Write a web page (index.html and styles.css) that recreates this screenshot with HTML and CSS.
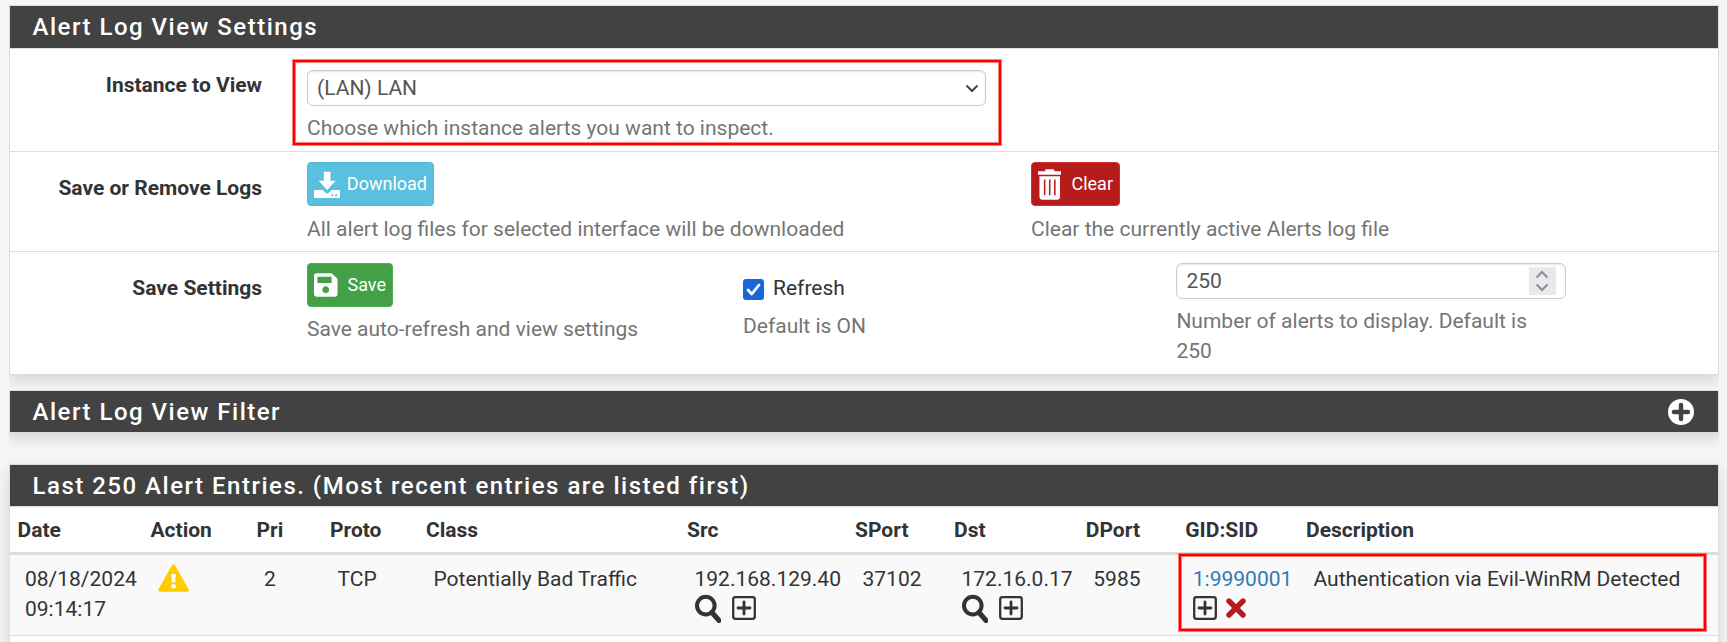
FILE: index.html
```
<!DOCTYPE html>
<html lang="en">
<head>
<meta charset="utf-8">
<title>Alert Log View</title>
<link rel="stylesheet" href="styles.css">
</head>
<body>
<svg class="defs" width="0" height="0" aria-hidden="true">
  <symbol id="i-search" viewBox="0 0 26 29"><circle cx="10.8" cy="11.6" r="8.8" fill="none" stroke="currentColor" stroke-width="4"/><path d="M17 18.500L24 26.500" stroke="currentColor" stroke-width="5" stroke-linecap="round"/></symbol>
  <symbol id="i-plus-sq" viewBox="0 0 24 24"><rect x="1.200" y="1.200" width="21.600" height="21.600" rx="2.200" fill="none" stroke="currentColor" stroke-width="2.300"/><path d="M12 6v12M6 12h12" stroke="currentColor" stroke-width="2.800" stroke-linecap="round"/></symbol>
  <symbol id="i-x" viewBox="0 0 20 20"><path d="M3 3L17 17M17 3L3 17" stroke="currentColor" stroke-width="5.400" stroke-linecap="round"/></symbol>
</svg>

<section class="panel panel-settings">
  <h2 class="panel-title">Alert Log View Settings</h2>
  <div class="row row-instance">
    <div class="label">Instance to View</div>
    <div class="instance">
      <div class="select"><span>(LAN) LAN</span>
        <svg width="14" height="9" viewBox="0 0 14 9"><path d="M1.500 1.500L7 7L12.500 1.500" fill="none" stroke="#444" stroke-width="2"/></svg>
      </div>
      <div class="help">Choose which instance alerts you want to inspect.</div>
      <div class="highlight highlight-instance"></div>
    </div>
  </div>
  <div class="row row-logs">
    <div class="label">Save or Remove Logs</div>
    <div class="col-download">
      <button class="btn btn-info"><svg width="28" height="30" viewBox="0 0 28 30"><path fill="#fff" d="M10.500 2h7v9.500h5.500L14 21.500L5 11.500h5.500z"/><path fill="#fff" fill-rule="evenodd" d="M1.500 21.500h7.500l5 4l5-4h7.500q1.500 0 1.500 1.500v5.500q0 1.500-1.500 1.500h-25Q0 30 0 28.500v-5.500q0-1.500 1.500-1.500zM18.500 26v2h2v-2zM22.500 26v2h2v-2z"/></svg><span>Download</span></button>
      <div class="help">All alert log files for selected interface will be downloaded</div>
    </div>
    <div class="col-clear">
      <button class="btn btn-danger"><svg width="24" height="32" viewBox="0 0 24 32"><path fill="#fff" fill-rule="evenodd" d="M0 3h7l1-2h8l1 2h7v3.500H0zM1.500 8h21v21q0 3-3 3h-15q-3 0-3-3zM6 11.500v16h1.600v-16zM11.200 11.500v16h1.600v-16zM16.400 11.500v16h1.600v-16z"/></svg><span>Clear</span></button>
      <div class="help">Clear the currently active Alerts log file</div>
    </div>
  </div>
  <div class="row row-save">
    <div class="label">Save Settings</div>
    <div class="col-save">
      <button class="btn btn-success"><svg width="24" height="24" viewBox="0 0 24 24"><path fill="#fff" fill-rule="evenodd" d="M2.500 0h15.500l6 5.500v16q0 2.500-2.500 2.500h-19Q0 24 0 21.500v-19Q0 0 2.500 0zM3.500 3.500v6.500h14.500V3.500zM12 13.300a3.500 3.500 0 1 0 .01 0z"/></svg><span>Save</span></button>
      <div class="help">Save auto-refresh and view settings</div>
    </div>
    <div class="col-refresh">
      <div class="check"><svg width="21" height="21" viewBox="0 0 21 21"><rect width="21" height="21" rx="3" fill="#1a66d8"/><path d="M5 11L8.800 15L16 6" fill="none" stroke="#fff" stroke-width="2.800" stroke-linecap="round" stroke-linejoin="round"/></svg><span>Refresh</span></div>
      <div class="help">Default is ON</div>
    </div>
    <div class="col-number">
      <div class="number"><span>250</span>
        <span class="spinner"><svg width="14" height="22" viewBox="0 0 14 22"><path d="M1.500 7.500L7 2L12.500 7.500M1.500 14.500L7 20L12.500 14.500" fill="none" stroke="#8f8f9d" stroke-width="2.200"/></svg></span>
      </div>
      <div class="help">Number of alerts to display. Default is 250</div>
    </div>
  </div>
</section>

<section class="panel panel-filter">
  <h2 class="panel-title">Alert Log View Filter
    <svg class="expand" width="26" height="26" viewBox="0 0 26 26"><circle cx="13" cy="13" r="13" fill="#fff"/><path d="M13 6v14M6 13h14" stroke="#424242" stroke-width="4.400" stroke-linecap="round"/></svg>
  </h2>
</section>

<section class="panel panel-entries">
  <h2 class="panel-title">Last 250 Alert Entries. (Most recent entries are listed first)</h2>
  <div class="entries thead">
    <div>Date</div><div>Action</div><div>Pri</div><div>Proto</div><div>Class</div><div>Src</div><div>SPort</div><div>Dst</div><div>DPort</div><div>GID:SID</div><div>Description</div>
  </div>
  <div class="entries tbody">
    <div>08/18/2024<br>09:14:17</div>
    <div><svg class="warn" width="31" height="28" viewBox="0 0 31 28"><path d="M15.500 2L29 26H2z" fill="#fc0" stroke="#fc0" stroke-width="3.500" stroke-linejoin="round"/><path d="M13.200 10h4.600l-.6 8.600h-3.400z" fill="#fff"/><circle cx="15.500" cy="22.300" r="2.400" fill="#fff"/></svg></div>
    <div>2</div><div>TCP</div><div>Potentially Bad Traffic</div>
    <div>192.168.129.40<span class="icons icons-host"><svg class="search"><use href="#i-search"/></svg><svg class="plus"><use href="#i-plus-sq"/></svg></span></div>
    <div>37102</div>
    <div>172.16.0.17<span class="icons icons-host"><svg class="search"><use href="#i-search"/></svg><svg class="plus"><use href="#i-plus-sq"/></svg></span></div>
    <div>5985</div>
    <div><a>1:9990001</a><span class="icons"><svg class="plus"><use href="#i-plus-sq"/></svg><svg class="remove"><use href="#i-x"/></svg></span></div>
    <div>Authentication via Evil-WinRM Detected</div>
    <div class="highlight highlight-entry"></div>
  </div>
</section>
</body>
</html>
```

FILE: styles.css
```
* { box-sizing: border-box; }
body {
  margin: 0;
  height: 642px;
  padding: 5px 8px 0 9px;
  overflow: hidden;
  background: #f5f5f5;
  color: #333;
  font: 21px/30px Roboto, "Liberation Sans", sans-serif;
}
.defs { position: absolute; }
.panel {
  height: 370px;
  background: #fff;
  border: 1px solid #ddd;
  box-shadow: 0 6px 14px rgba(0, 0, 0, .13);
}
.panel-settings, .panel-filter { clip-path: inset(0 0 -30px 0); }
.panel-title {
  display: flex;
  align-items: center;
  justify-content: space-between;
  margin: 0;
  height: 43px;
  padding: 0 24.500px 0 22.500px;
  border-bottom: 1px solid #ddd;
  background: #424242;
  color: #fff;
  font-size: 24px;
  font-weight: 500;
  letter-spacing: 1.5px;
}
.panel-filter { height: 43px; margin-top: 15px; }
.panel-filter .panel-title { height: 41px; border: 0; }
.panel-entries { height: 190px; margin-top: 31px; }
.panel-entries .panel-title { height: 42px; }

.row { display: flex; border-bottom: 1px solid #ddd; }
.row-instance { height: 103px; }
.row-logs { height: 100px; }
.row-save { height: 122px; border: 0; }
.label { width: 252px; margin-right: 45px; padding-top: 21px; text-align: right; font-weight: 700; }
.help { color: #757575; }

.instance { position: relative; width: 679px; padding-top: 21px; }
.select, .number {
  display: flex;
  align-items: center;
  justify-content: space-between;
  height: 36px;
  padding: 0 6px 0 9px;
  border: 1px solid #ccc;
  border-radius: 6px;
  box-shadow: inset 0 1px 2px rgba(0, 0, 0, .1);
  background: #fff;
  color: #555;
}
.instance .help { margin-top: 7px; }
.highlight {
  position: absolute;
  border: 2px solid #f00;
  box-shadow: 0 0 0 1px rgba(255, 0, 0, .5), inset 0 0 0 1px rgba(255, 0, 0, .5);
  pointer-events: none;
}
.highlight-instance { left: -14px; top: 11px; width: 708px; height: 85px; }

.btn {
  display: flex;
  align-items: center;
  height: 44px;
  padding: 0 6px;
  border: 1px solid;
  border-radius: 4px;
  color: #fff;
  font: 18px/27px Roboto, "Liberation Sans", sans-serif;
}
.btn span { padding-bottom: 2px; }
.btn-info { width: 127px; background: #5bc0de; border-color: #46b8da; }
.btn-danger { width: 89px; background: #b71c1c; border-color: #d32f2f; }
.btn-success { width: 86px; background: #43a047; border-color: #4caf50; }
.btn-info span { margin-left: 6.500px; }
.btn-danger span, .btn-success span { margin-left: 10px; }
.col-download { width: 724px; padding-top: 10px; }
.col-clear { padding-top: 10px; }
.row-logs .help { margin-top: 8px; }

.col-save { width: 436px; padding-top: 11px; }
.col-save .help { margin-top: 7px; }
.col-refresh { width: 433.400px; padding-top: 21px; }
.check { display: flex; align-items: center; gap: 9px; height: 30px; }
.check svg { margin-top: 2px; }
.col-refresh .help { margin-top: 8px; }
.col-number { width: 389.500px; padding-top: 11px; }
.col-number .help { width: 360px; margin-top: 7px; }
.number { padding-right: 9px; }
.spinner { display: flex; align-items: center; justify-content: center; width: 27px; height: 28px; background: #e9e9ed; }

.entries {
  position: relative;
  display: grid;
  grid-template-columns: 133px 106px 73.500px 96px 261px 168px 99px 131.800px 99.500px 120.700px 1fr;
  padding-left: 7.500px;
}
.thead { height: 48px; padding-top: 8px; border-bottom: 3px solid #ddd; font-weight: 700; }
.tbody { height: 81px; padding: 9px 0 0 15px; border-bottom: 1px solid #ddd; background: #f9f9f9; white-space: nowrap; }
.warn { display: block; }
.tbody a { color: #337ab7; }
.icons { display: flex; align-items: center; height: 28px; gap: 9.500px; }
.icons-host { gap: 11px; }
.search { width: 26px; height: 29px; }
.plus { width: 24px; height: 24px; }
.remove { width: 20px; height: 20px; color: #b71c1c; }
.highlight-entry { left: 1169px; top: -1px; width: 527px; height: 77px; }
```
